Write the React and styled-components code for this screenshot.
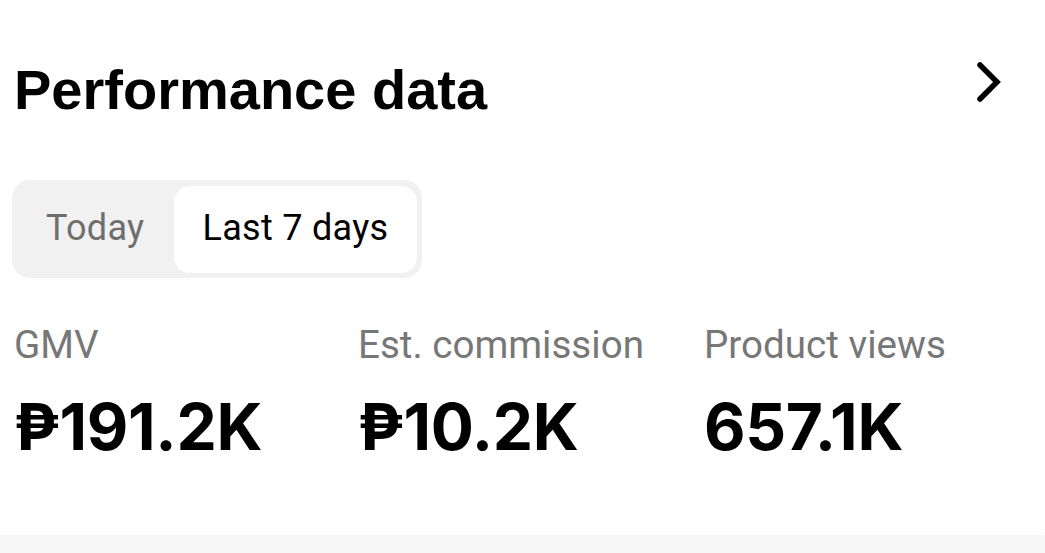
import React from 'react'
import styled, { createGlobalStyle } from 'styled-components'

const Global = createGlobalStyle`
	html, body {
		margin: 0;
		padding: 0;
		background: #ffffff;
	}
	body {
		font-family: 'Roboto', 'Liberation Sans', sans-serif;
	}
`

const Page = styled.div`
	width: 1045px;
	height: 553px;
	display: flex;
	flex-direction: column;
	overflow: hidden;
`

const Card = styled.section`
	flex: 1;
	padding: 62px 0 0 14px;
	display: flex;
	flex-direction: column;
`

const Header = styled.div`
	display: flex;
	align-items: center;
	justify-content: space-between;
	padding-right: 40px;
	height: 56px;
`

const Title = styled.h1`
	margin: 0;
	font-family: 'Liberation Sans', Arial, sans-serif;
	font-weight: 700;
	font-size: 56px;
	line-height: 56px;
	color: #000;
`

const Chevron = styled.svg`
	width: 30px;
	height: 42px;
	margin-top: -16px;
`

const Segmented = styled.div`
	margin-top: 62px;
	margin-left: -2px;
	align-self: flex-start;
	display: flex;
	align-items: stretch;
	height: 98px;
	box-sizing: border-box;
	padding: 6px 5px 5px 0;
	background: #f1f1f1;
	border-radius: 18px;
`

const Segment = styled.div`
	display: flex;
	align-items: center;
	padding: 0 ${p => (p.$active ? '29px' : '30px')} 4px ${p => (p.$active ? '28px' : '34px')};
	border-radius: 16px;
	font-size: 36px;
	letter-spacing: 0.3px;
	background: ${p => (p.$active ? '#ffffff' : 'transparent')};
	color: ${p => (p.$active ? '#000000' : '#6e6e6e')};
`

const Stats = styled.div`
	margin-top: 48px;
	display: grid;
	grid-template-columns: 344px 346px 1fr;
`

const Stat = styled.div`
	display: flex;
	flex-direction: column;
`

const Label = styled.div`
	font-size: 38.6px;
	line-height: 38px;
	color: #777777;
`

const Value = styled.div`
	margin-top: 32px;
	font-family: 'Inter', 'Noto Sans', sans-serif;
	font-weight: 700;
	font-size: 64px;
	line-height: 62px;
	letter-spacing: -0.3px;
	color: #000;
`

const Footer = styled.div`
	height: 18px;
	background: #f7f7f7;
	box-shadow: 0 -6px 8px rgba(0, 0, 0, 0.012);
`

const stats = [
	{ label: 'GMV', value: '₱191.2K' },
	{ label: 'Est. commission', value: '₱10.2K' },
	{ label: 'Product views', value: '657.1K' },
]

const App = () => (
	<Page>
		<Global />
		<Card>
			<Header>
				<Title>Performance data</Title>
				<Chevron viewBox="0 0 30 42">
					<path
						d="M5 4 L22 21 L5 38"
						fill="none"
						stroke="#000"
						strokeWidth="5.5"
						strokeLinecap="round"
						strokeLinejoin="miter"
					/>
				</Chevron>
			</Header>
			<Segmented>
				<Segment>Today</Segment>
				<Segment $active>Last 7 days</Segment>
			</Segmented>
			<Stats>
				{stats.map(s => (
					<Stat key={s.label}>
						<Label>{s.label}</Label>
						<Value>{s.value}</Value>
					</Stat>
				))}
			</Stats>
		</Card>
		<Footer />
	</Page>
)

export default App
